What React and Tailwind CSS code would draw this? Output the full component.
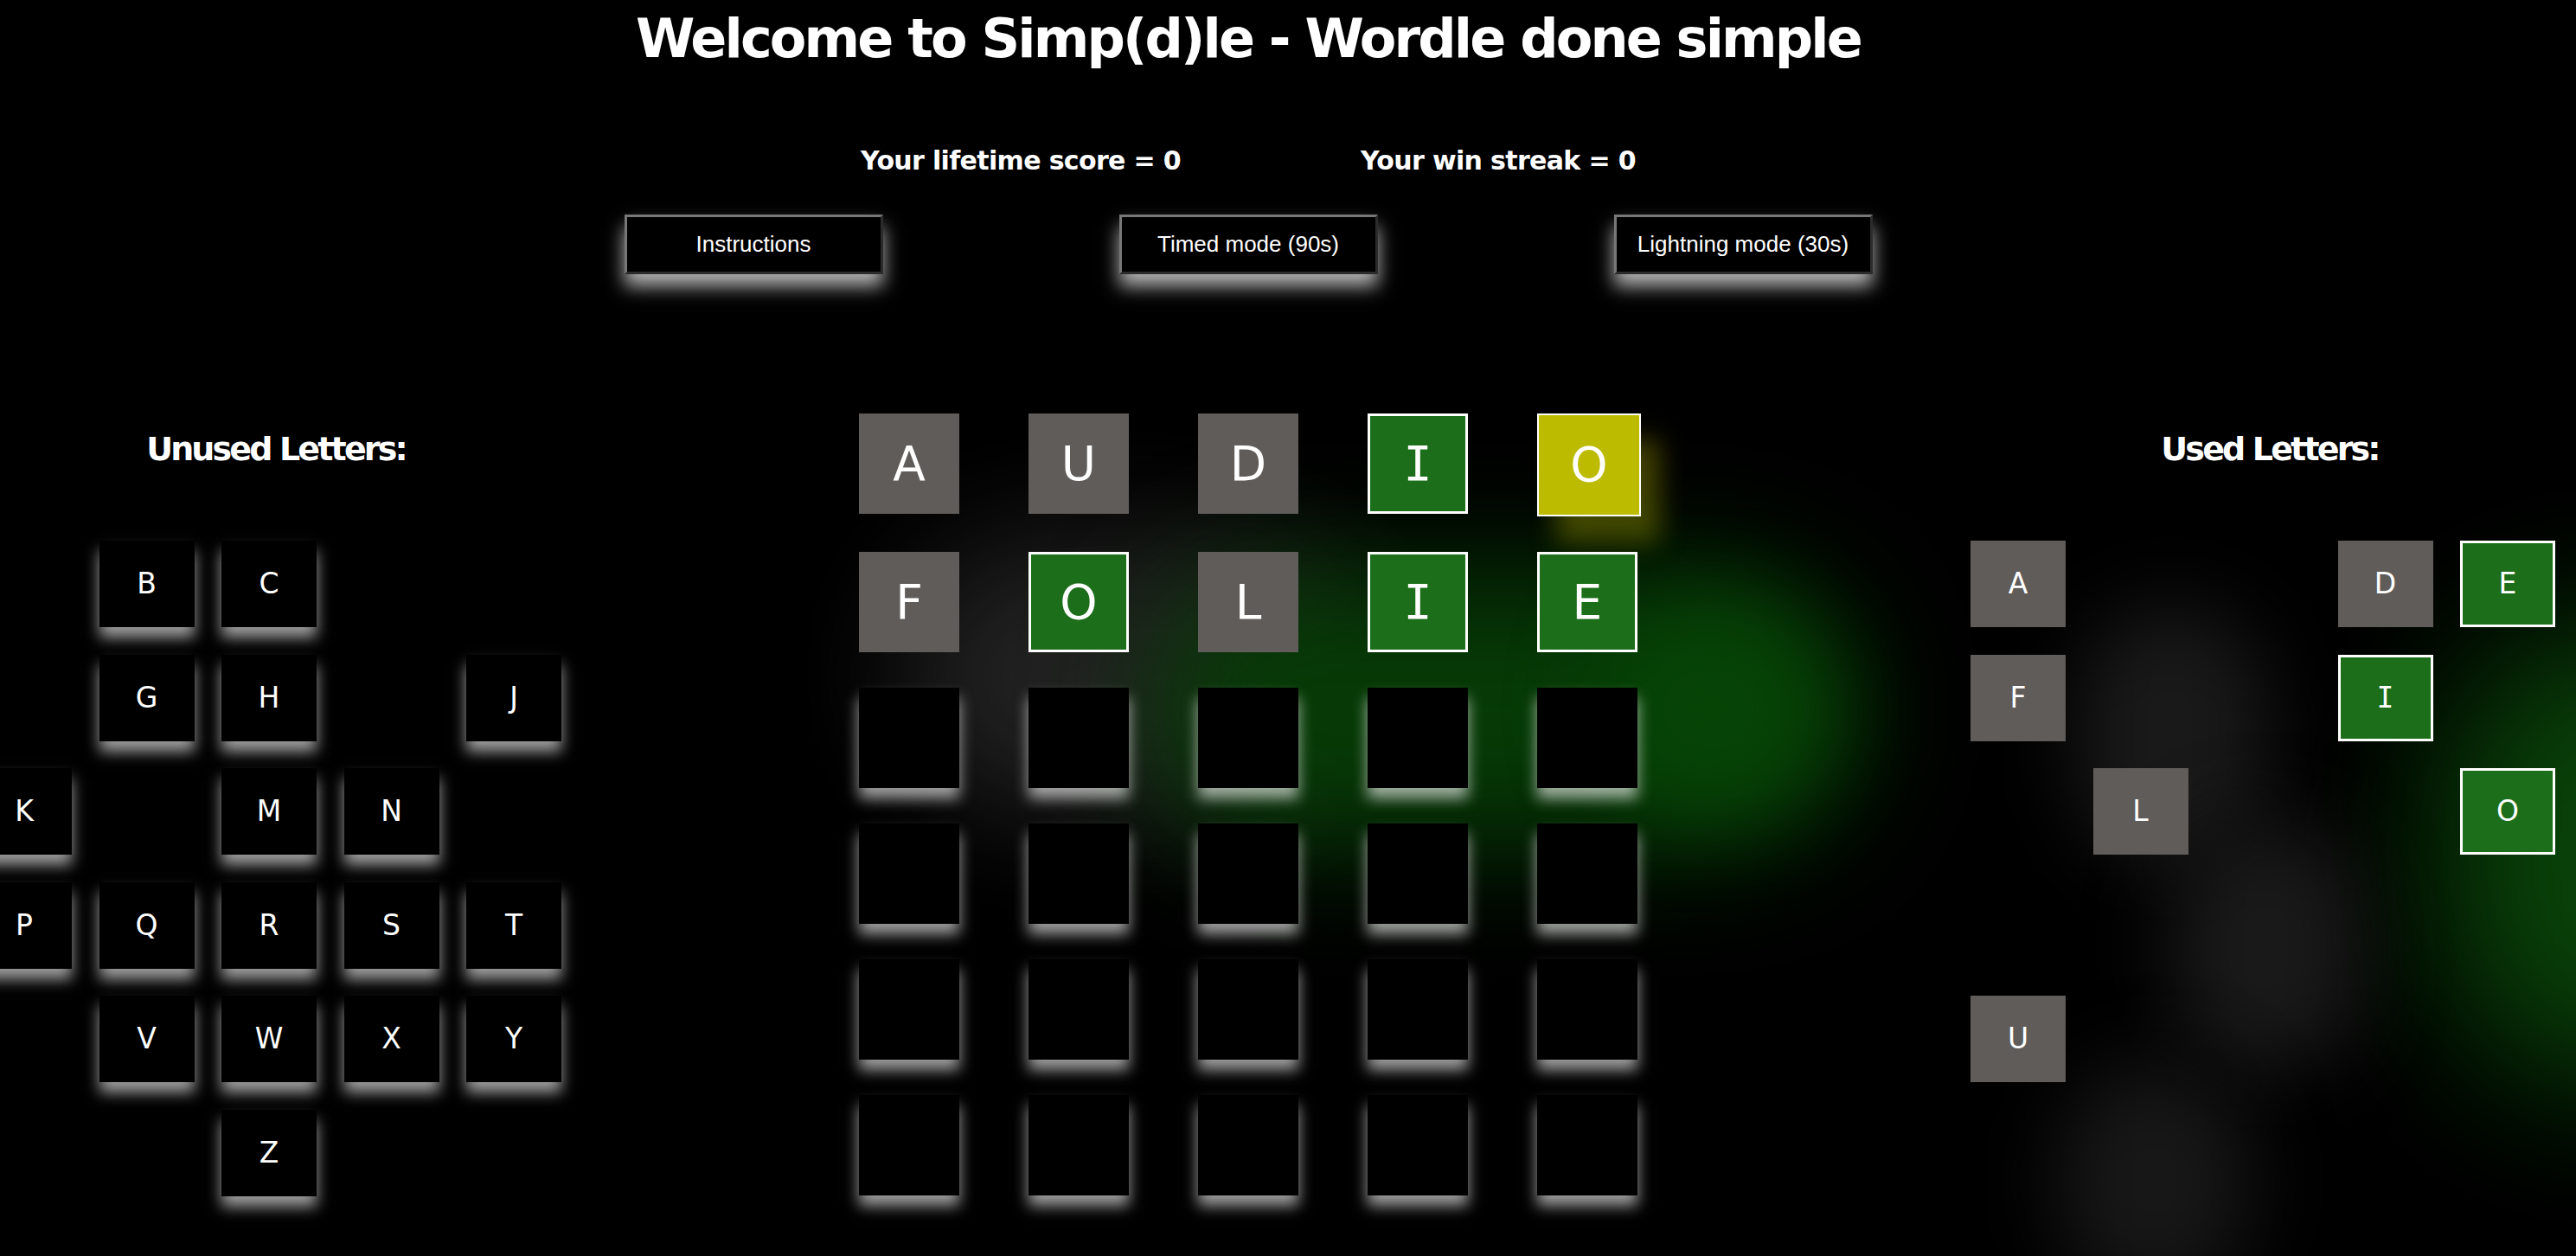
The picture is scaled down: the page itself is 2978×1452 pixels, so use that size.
import React from 'react';

const ALPHABET = 'ABCDEFGHIJKLMNOPQRSTUVWXYZ'.split('');
const USED = { A: 'gray', D: 'gray', E: 'green', F: 'gray', I: 'green', L: 'gray', O: 'green', U: 'gray' };
const GUESSES = [
  [['A', 'gray'], ['U', 'gray'], ['D', 'gray'], ['I', 'green'], ['O', 'yellow']],
  [['F', 'gray'], ['O', 'green'], ['L', 'gray'], ['I', 'green'], ['E', 'green']],
];

const glow = 'shadow-[0_12px_16px_rgba(255,255,255,0.62)]';

function Glyph({ ch }) {
  // Verdana style capital I has serifs, mono gets closest
  if (ch === 'I') return <span className="font-['DejaVu_Sans_Mono',monospace]">I</span>;
  return <span>{ch}</span>;
}

function BoardTile({ ch, state }) {
  if (!ch) return <div className={`w-[116px] h-[116px] bg-black ${glow}`}></div>;
  if (state === 'gray')
    return <div className="w-[116px] h-[116px] bg-[#5f5c5a] flex items-center justify-center text-white text-[55px]"><Glyph ch={ch} /></div>;
  if (state === 'yellow')
    return <div className="w-[120px] h-[119px] -mr-[4px] bg-[#bcbb00] border-2 border-white flex items-center justify-center text-white text-[55px] shadow-[22px_30px_28px_rgba(188,187,0,0.35)]"><Glyph ch={ch} /></div>;
  return <div className="w-[116px] h-[116px] bg-[#1c6e1a] border-[3px] border-white flex items-center justify-center text-white text-[55px]"><Glyph ch={ch} /></div>;
}

function KeyTile({ ch, state, hidden }) {
  let cls = `bg-black ${glow}`;
  if (state === 'gray') cls = 'bg-[#5f5c5a]';
  if (state === 'green') cls = 'bg-[#1c6e1a] border-[3px] border-white';
  return (
    <div className={`w-[110px] h-[100px] flex items-center justify-center text-white text-[33px] ${cls} ${hidden ? 'invisible' : ''}`}>
      <Glyph ch={ch} />
    </div>
  );
}

function LetterPanel({ title, used }) {
  return (
    <div className="w-[676px] flex flex-col items-center">
      <h2 className="mt-[22px] text-[38px] leading-none font-bold text-white tracking-[-0.075em] pl-[16px]">{title}</h2>
      <div className="mt-[87px] w-[676px] flex flex-wrap justify-center gap-x-[31.5px] gap-y-[31.5px]">
        {ALPHABET.map(ch => (
          <KeyTile key={ch} ch={ch} state={used ? USED[ch] : undefined} hidden={used ? !USED[ch] : !!USED[ch]} />
        ))}
      </div>
    </div>
  );
}

function TopButton({ children }) {
  return (
    <button className="w-[299px] h-[69px] bg-black text-white text-[26px] font-['Liberation_Sans',Arial,sans-serif] border-[3px] border-t-[#777] border-l-[#777] border-b-[#2b2b2b] border-r-[#2b2b2b] shadow-[0_14px_20px_rgba(255,255,255,0.7)]">
      {children}
    </button>
  );
}

export default function App() {
  const rows = [...GUESSES, ...Array.from({ length: 4 }, () => Array(5).fill([null, null]))];

  return (
    <div className="relative w-[2978px] h-[1452px] overflow-hidden bg-black font-['DejaVu_Sans','Verdana',sans-serif]">
      {/* background bubbles */}
      <div className="absolute left-[1040px] top-[620px] w-[540px] h-[320px] rounded-full bg-[#2a2a2a] blur-[70px] opacity-80"></div>
      <div className="absolute left-[1330px] top-[660px] w-[820px] h-[320px] rounded-full bg-[#063a06] blur-[70px]"></div>
      <div className="absolute left-[1850px] top-[700px] w-[260px] h-[240px] rounded-full bg-[#064406] blur-[50px]"></div>
      <div className="absolute left-[2820px] top-[720px] w-[400px] h-[540px] rounded-full bg-[#0a4a0a] blur-[90px] opacity-90"></div>
      <div className="absolute left-[2400px] top-[700px] w-[220px] h-[300px] rounded-full bg-[#191919] blur-[45px]"></div>
      <div className="absolute left-[2510px] top-[950px] w-[220px] h-[290px] rounded-full bg-[#191919] blur-[45px]"></div>
      <div className="absolute left-[2380px] top-[1230px] w-[220px] h-[270px] rounded-full bg-[#171717] blur-[45px]"></div>

      <div className="relative w-[2886px] flex flex-col items-center text-white">
        <h1 className="mt-[14px] text-[62px] leading-none font-bold tracking-[-0.046em]">Welcome to Simp(d)le - Wordle done simple</h1>
        <div className="mt-[95px] flex gap-[208px] text-[30px] leading-none font-bold tracking-[-0.022em]">
          <span>Your lifetime score = 0</span>
          <span>Your win streak = 0</span>
        </div>
        <div className="mt-[47px] flex gap-[273px]">
          <TopButton>Instructions</TopButton>
          <TopButton>Timed mode (90s)</TopButton>
          <TopButton>Lightning mode (30s)</TopButton>
        </div>
      </div>

      <div className="relative mt-[161px] flex items-start">
        <div className="-ml-[27px]">
          <LetterPanel title="Unused Letters:" />
        </div>
        <div className="ml-[344px] flex flex-col gap-y-[41px]">
          {rows.map((row, r) => (
            <div key={r} className="flex gap-x-[80px]">
              {row.map(([ch, state], c) => <BoardTile key={c} ch={ch} state={state} />)}
            </div>
          ))}
        </div>
        <div className="ml-[385px]">
          <LetterPanel title="Used Letters:" used />
        </div>
      </div>
    </div>
  );
}
